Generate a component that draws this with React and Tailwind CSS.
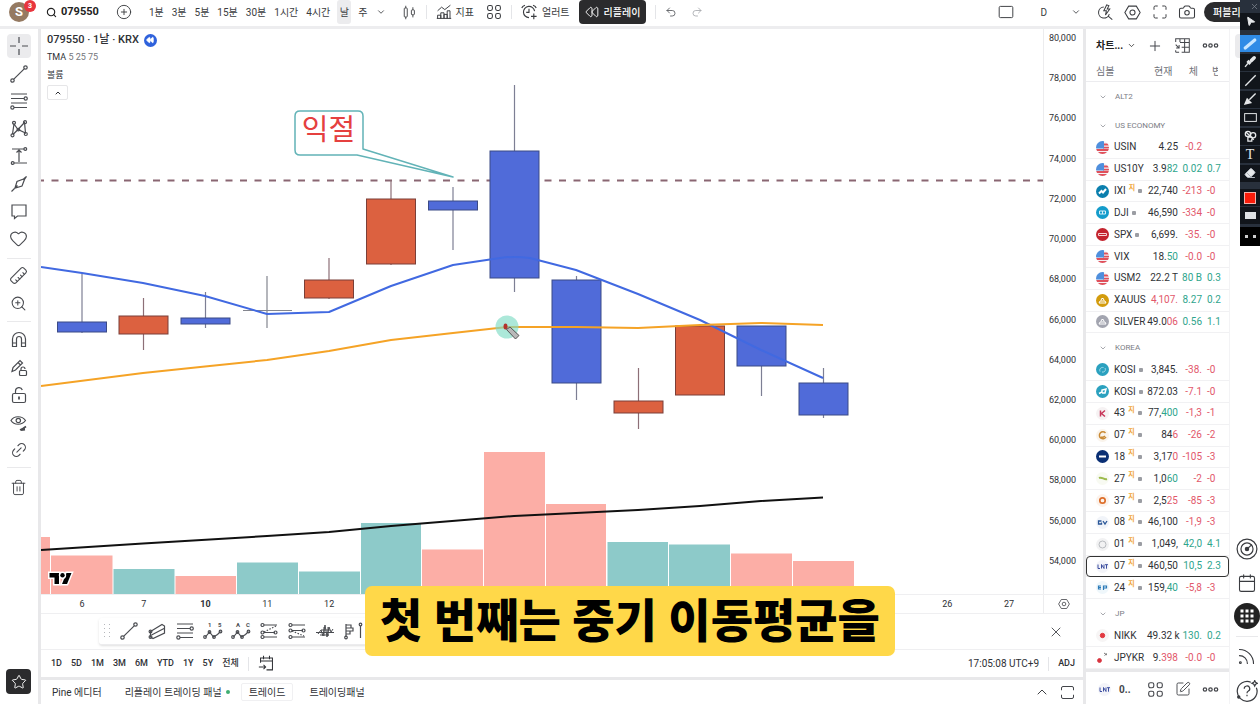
import {
  ChevronDown, ChevronUp, Search, CirclePlus, Undo2, Redo2, Camera, Heart, Trash2, Star, X, Plus,
  Calendar, Rss, Maximize, ZoomIn, Link2, Ruler, SquarePen, Rewind, Eraser,
  MousePointer2, Highlighter, Brush,
} from "lucide-react";

const FONT = "font-['Roboto','Noto_Sans_CJK_KR',sans-serif]";

function Draw({ size = 20, children, w = 1.2 }) {
  return (
    <svg width={size} height={size} viewBox="0 0 20 20" fill="none" stroke="currentColor" strokeWidth={w} aria-hidden="true">
      {children}
    </svg>
  );
}

const CrossIcon = () => <Draw><path d="M10 1v6M10 13v6M1 10h6M13 10h6" /></Draw>;
const TrendIcon = () => (
  <Draw><circle cx="3.5" cy="16.5" r="1.7" /><circle cx="16.5" cy="3.5" r="1.7" /><path d="M4.8 15.2 15.2 4.8" /></Draw>
);
const FibIcon = () => (
  <Draw><path d="M2 3h16M2 7.5h13M2 12h16M5 16.5h13" /><circle cx="16.7" cy="7.5" r="1.6" /><circle cx="3.4" cy="16.5" r="1.6" /></Draw>
);
const PatternIcon = () => (
  <Draw>
    <path d="M3.5 15 5 5l4 5.5 6.5-7 1 10.5L9 10.5 4 15.5" />
    <circle cx="3.5" cy="16.3" r="1.5" /><circle cx="5" cy="3.8" r="1.5" /><circle cx="9.4" cy="10.6" r="1.3" />
    <circle cx="16" cy="3.2" r="1.5" /><circle cx="16.8" cy="15" r="1.5" />
  </Draw>
);
const RangeIcon = () => (
  <Draw><path d="M3 3h12M5 17h13M10 4v12M7.5 6.5 10 4l2.5 2.5" /><circle cx="16.3" cy="3" r="1.4" /><circle cx="3.7" cy="17" r="1.4" /></Draw>
);
const PenIcon = () => (
  <Draw><path d="M2.500 17.500 8.500 11.500M6 14 8 7.500 14.500 5 17.500 2.500 15.500 5.500 13 12ZM14.500 5l.5 1" /></Draw>
);
const CommentIcon = () => <Draw><path d="M3 4h14v11H8.500L5.500 17.500V15H3Z" /></Draw>;
const MagnetIcon = () => (
  <Draw><path d="M3.500 16.500V9a6.500 6.500 0 0 1 13 0v7.500H12.500V9a2.500 2.500 0 0 0-5 0v7.500ZM3.500 13h4M12.500 13h4" /></Draw>
);
const PencilLockIcon = () => (
  <Draw>
    <path d="M3 13.500 4 9.500l7-7 2.500 2.500-7 7ZM9 4.500 11.500 7" /><rect x="10.500" y="12.500" width="7" height="5" rx="1" />
    <path d="M12 12.500V11a2 2 0 0 1 4 0" />
  </Draw>
);
const UnlockIcon = () => (
  <Draw>
    <rect x="3.500" y="8.500" width="13" height="9" rx="1.500" /><path d="M6.500 8.500V6a3.500 3.500 0 0 1 6.800-1" />
    <path d="M10 11.500v3" strokeWidth="1.800" />
  </Draw>
);
const EyeBrushIcon = () => (
  <Draw>
    <path d="M2 7.500C5 2.500 13 2.500 16.500 7.500 13 12.500 5 12.500 2 7.500Z" /><circle cx="9.300" cy="7.500" r="2.200" />
    <path d="m11 17 3-1.500 3-2M12 17l4-.5" strokeWidth="1.800" />
  </Draw>
);
const ChannelIcon = () => (
  <Draw>
    <path d="M3.500 10.500 15 3.500 17.500 5v7L6 17.500 3.500 16ZM4.500 14 17 7.500" />
    <circle cx="3.500" cy="16" r="1.400" /><circle cx="3.500" cy="10.500" r="1.400" />
  </Draw>
);
const WaveIcon = ({ a, b }) => (
  <Draw>
    <path d="m2.500 16 4-5 4 5 4-2.500 3-3" />
    <circle cx="2" cy="16" r="1.300" /><circle cx="6.500" cy="11" r="1.300" /><circle cx="11" cy="16" r="1.300" /><circle cx="17.500" cy="10.500" r="1.300" />
    <text x="5" y="5.500" fontSize="6" stroke="none" fill="currentColor" fontWeight="700">{a}</text>
    <text x="15" y="5.500" fontSize="6" stroke="none" fill="currentColor" fontWeight="700">{b}</text>
  </Draw>
);
const PositionIcon = ({ flip }) => (
  <Draw>
    <path d={flip ? "M5 4h13M5 9.500h11M5 16h13" : "M5 4h13M5 11.500h11M5 16h13"} />
    <path d={flip ? "m5 10 12 5" : "M5 11 17 5"} strokeDasharray="1.500 1.500" />
    <circle cx="3.500" cy="4" r="1.500" /><circle cx="3.500" cy={flip ? 9.500 : 11.500} r="1.500" />
    <circle cx="16.500" cy={flip ? 9.500 : 11.500} r="1.500" /><circle cx="3.500" cy="16" r="1.500" />
  </Draw>
);
const CycleIcon = () => (
  <Draw w={1}><path d="M1 11.500h18M3 13l3-4 2 6 2-11 2 12 2-10 2 5 2-3M6 9h9M9 6v9M13 6v9M5 14h9" /></Draw>
);
const ProfileIcon = () => (
  <Draw><path d="M3 3v13M3 4h5v3H3M3 7h7v3H3M3 10h4v3H3M17.500 5v12" /><circle cx="17.500" cy="3.500" r="1.300" /><circle cx="3" cy="16.500" r="1.300" /></Draw>
);
const CandlesIcon = () => (
  <Draw size={15}><rect x="3" y="4" width="4" height="12" rx="1" /><path d="M5 1v3M5 16v3M14.500 3v3.500M14.500 13v3.500" /><rect x="12.500" y="6.500" width="4" height="6.500" rx="1" /></Draw>
);
const IndicatorIcon = () => (
  <Draw size={16}><path d="M2 8.500 7 4l4 3 7-5.500M2 18v-4h4v4M6 18v-7h4v7M10 18v-5h4v5M14 18V8.500h3.500V18M1 18h18" /></Draw>
);
const AlarmIcon = () => (
  <Draw size={16} w={1.400}>
    <path d="M17 9a7 7 0 1 0-7 8M10 6v4.500H6.500M1 5c.5-2 2-3 4-3.500M19 5c-.5-2-2-3-4-3.500M16 12v7M12.500 15.500h7" />
  </Draw>
);
const DotsIcon = () => (
  <Draw size={17} w={1.500}><circle cx="3.500" cy="10" r="2" /><circle cx="10" cy="10" r="2" /><circle cx="16.500" cy="10" r="2" /></Draw>
);
const GridIcon = ({ size = 15 }) => (
  <Draw size={size} w={1.300}>
    <rect x="2" y="2" width="6" height="6" rx="2" /><rect x="12" y="2" width="6" height="6" rx="2" />
    <rect x="2" y="12" width="6" height="6" rx="2" /><rect x="12" y="12" width="6" height="6" rx="2" />
  </Draw>
);
const HexIcon = ({ size }) => (
  <Draw size={size}><path d="M5.500 2.500h9L19 10l-4.500 7.500h-9L1 10Z" /><circle cx="10" cy="10" r="3" /></Draw>
);
const QuickSearchIcon = () => (
  <Draw size={17}><path d="M8 3.500A6.500 6.500 0 1 0 14.500 12M13.500 14.500l4.500 4M11.500 1 8 8h3l-1 5 5-7h-3L14 2Z" /></Draw>
);
const TableIcon = () => (
  <Draw size={17}><path d="M2 6V2h16v16H9M7 6.500h11M9 12h9M12.500 2v16M7 2v4M2 9l4 4M6 9.500V13H2.500M2 18h4M2 15.500V18" /></Draw>
);
const TargetIcon = () => (
  <Draw size={22} w={1.100}><circle cx="10" cy="10" r="9" /><circle cx="10" cy="10" r="5.500" /><circle cx="10" cy="10" r="1.500" fill="currentColor" /><path d="m10 10 4.500-4" /></Draw>
);
const HelpIcon = () => (
  <Draw size={22} w={1.100}>
    <path d="M13.500 2A9 9 0 1 0 18.500 7" /><path d="M7.500 8a2.500 2.500 0 1 1 3.500 2.200q-1 .5-1 1.800M10 13.500v1.300" />
    <path d="m17 .5.800 1.700 1.700.8-1.700.8L17 5.500l-.8-1.700-1.700-.8 1.700-.8Z" /><circle cx="2.500" cy="15.500" r="1" fill="currentColor" />
  </Draw>
);
const BarCalendarIcon = () => (
  <Draw size={17}><path d="M3 9V3.500h14v14H10M3 7h14M6.500 1v4M13.500 1v4M1 14h8M6.500 11.500 9 14l-2.500 2.500" /></Draw>
);

const candles = [
  [82, 322, 332, 274, 333, 0], [143.5, 316, 334, 298, 350, 1], [205.500, 318, 324, 292, 328, 0],
  [329, 280, 298, 258, 299, 1], [391, 199, 264, 180, 265, 1],
  [453, 201, 210, 187, 250, 0], [514.500, 151, 278, 85, 292, 0], [576.500, 280, 383, 276, 400, 0],
  [638.500, 401, 413, 368, 429, 1], [700, 326, 395, 324, 395, 1], [761.500, 326, 366, 326, 396, 0],
  [823.500, 383, 415, 368, 418, 0],
];
const volumes = [
  [41, 50, 537, 1], [51, 112.500, 555.500, 1], [113.500, 174.500, 569, 0], [175.500, 236, 576, 1], [237, 298, 562.500, 0],
  [299, 360, 571.500, 0], [361, 421, 523, 0], [422, 483, 549.500, 1], [484, 545, 452, 1], [546, 606, 504, 1],
  [607.500, 668, 542, 0], [669, 730, 544.500, 0], [731, 792, 553.500, 1], [793, 854, 561, 1],
];

function Chart() {
  return (
    <svg className="block h-full w-full" viewBox="41 29 1002 565" preserveAspectRatio="none" role="img" aria-label="079550 chart">
      {volumes.map(([a, b, y, up]) => (
        <rect key={a} x={a} y={y} width={b - a} height={594 - y} fill={up ? "#fcaea6" : "#8dcac9"} />
      ))}
      <path d="M41 180.500H1043" stroke="#8a6672" strokeWidth="1.800" strokeDasharray="7 7.500" strokeDashoffset="4" />
      <path d="M267 276V328M243 310.500H292" stroke="#84868f" strokeWidth="1.200" />
      {candles.map(([x, t, b, hi, lo, up]) => (
        <g key={x}>
          <path d={`M${x} ${hi}V${lo}`} stroke={up ? "#8d6f77" : "#7d7f94"} strokeWidth="1.200" />
          <rect x={x - 24.500} y={t} width="49" height={b - t} fill={up ? "#dc6140" : "#506bd9"} stroke={up ? "#7a3f38" : "#3b4a86"} strokeWidth="1" />
        </g>
      ))}
      <path fill="none" stroke="#4169e1" strokeWidth="2" strokeLinejoin="round"
        d="M41 267 82 273 143 283 205 296 267 314 329 312 391 286 453 265 500 258Q514 256 530 258L576 270 638 294 700 320 761 350 823 378" />
      <path fill="none" stroke="#f5a326" strokeWidth="2" strokeLinejoin="round"
        d="M41 386 143 373 205 366.500 267 360 329 351 391 340 453 333 507 327 576 327 638 328 700 325 761 323 823 325" />
      <path fill="none" stroke="#111" strokeWidth="2"
        d="M41 550 143 543.500 267 536 329 532 391 526 514 516 576 513 638 510 700 506 761 501 823 497.500" />
      <path fill="#fff" stroke="#62b3b7" strokeWidth="1.500" strokeLinejoin="round"
        d="M300 111H358Q363 111 363 116V149L453 177 357 155H300Q295 155 295 150V116Q295 111 300 111Z" />
      <text x="328.500" y="140" textAnchor="middle" fontSize="29" fill="#e5403f" fontFamily="Noto Sans CJK KR, sans-serif">익절</text>
      <g stroke="#fff" strokeWidth="3" paintOrder="stroke" fill="#000">
        <path d="M49.500 573H59V584H54.500V577.500H49.500Z" /><path d="M66.500 573H71.500L67 584H62Z" /><circle cx="62.500" cy="575.300" r="2.200" />
      </g>
      <circle cx="507" cy="327" r="11.500" fill="#7fdcc4" fillOpacity=".65" />
      <ellipse cx="505.500" cy="326.500" rx="2" ry="3" fill="#b3332c" />
      <path d="m506.500 329.500 3.500-2.500 9 8.500-3.500 3.500Z" fill="#b9b9b9" stroke="#555" strokeWidth="1" />
    </svg>
  );
}

function Bullet({ kind }) {
  if (kind === "us")
    return (
      <svg width="13" height="13" viewBox="0 0 13 13" className="shrink-0" aria-hidden="true">
        <clipPath id="disc"><circle cx="6.500" cy="6.500" r="6.500" /></clipPath>
        <g clipPath="url(#disc)">
          <path fill="#f3f3f6" d="M0 0h13v13H0z" />
          <path stroke="#e0505b" strokeWidth="1.800" d="M7 3.500h6M7 6.700h6M0 9h13M1 12h11" />
          <path fill="#4f8fdd" d="M0 0h8v7.500H0z" />
        </g>
      </svg>
    );
  const [bg, fg, mark] = {
    ixi: ["#0b7fae", "#fff", <path d="M3 8.500 5.500 6l1.500 1.500L10 4" strokeWidth="2" />],
    dji: ["#149ccb", "#d6effa", <path d="M3.500 5h6v3h-6zM6.500 5v3" />],
    spx: ["#c4242f", "#f6d5d7", <path d="M2.500 5.500h8v2h-8z" />],
    gold: ["#d39c0d", "#fff", <path d="m3 9 1-2h5l1 2ZM5 6.500l.700-2h1.600l.7 2" />],
    silver: ["#a3a5b0", "#fff", <path d="m3 9 1-2h5l1 2ZM5 6.500l.700-2h1.600l.7 2" />],
    kospi: ["#2ba1bf", "#a5dcea", <path d="M4 8.500C3 6 5 4 7.500 4.500M6 9c3 .5 4-2 3-4" strokeWidth="1" />],
    kosdaq: ["#2ba1bf", "#fff", <path d="m3 8.500 3-1.500V5l4-1-1 4H6" strokeWidth="1.500" />],
    k43: ["#f6f2f3", "#c8375a", <path d="M4.500 3.500v6M9 3.500 5.500 6.500 9 9.500" strokeWidth="1.500" />],
    c07: ["#faf4ec", "#c98a35", <path d="M9.500 4A3.500 3.500 0 1 0 10 8M5 8c2 1 3 0 4-1" strokeWidth="1.500" />],
    n18: ["#0a2f74", "#fff", <path d="M3 6.500h7" strokeWidth="2" />],
    g27: ["#f8faf2", "#9dbb4d", <path d="M3 6c3-1.500 5 2 8 1" strokeWidth="2" />],
    o37: ["#fcf3ec", "#dd6f2b", <circle cx="6.500" cy="6.500" r="2.700" strokeWidth="1.700" />],
    gv: ["#f1f4f9", "#2a5798", <path d="M5.500 5h-3v3h3V6.500M7 5l2 3 2-3" strokeWidth="1.300" />],
    ring: ["#f2f2f3", "#b9bcc0", <circle cx="6.500" cy="6.500" r="3.500" />],
    lnt: ["#f3f4f9", "#3c4ea0", <path d="M2 4.500v4h2M5.500 8.500v-4l2.500 4v-4M9 4.700h3M10.500 4.700v4" />],
    kp: ["#eff7fb", "#2a7ab8", <path d="M5 5H2.500v3H5M2.500 6.500H5M7.500 9V5h3v2h-3" strokeWidth="1.200" />],
    jp: ["#f7f5f5", "#e23840", <circle cx="6.500" cy="6.500" r="2.200" fill="#e23840" />],
    jpkr: ["#fff", "#d8343f", <><circle cx="3.500" cy="9.500" r="1.900" fill="#d8343f" /><path d="m8 2 3 2M8.500 4.500 11 2.500" stroke="#777" /></>],
  }[kind];
  return (
    <svg width="13" height="13" viewBox="0 0 13 13" fill="none" stroke={fg} className="shrink-0" aria-hidden="true">
      <circle cx="6.500" cy="6.500" r="6.500" fill={bg} stroke="none" />
      {mark}
    </svg>
  );
}

const R = "text-[#e2586b]";
const G = "text-[#2fa58d]";
// icon, symbol, delayed tag, status dot, last (dark part, tinted part), change, percent, tint, tint of the last digits
const us = [
  ["us", "USIN", 0, 0, "4.25", "", "-0.2", "", R],
  ["us", "US10Y", 0, 0, "3.9", "82", "0.02", "0.7", G],
  ["ixi", "IXI", 1, 1, "22,740", "", "-213", "-0", R],
  ["dji", "DJI", 0, 1, "46,590", "", "-334", "-0", R],
  ["spx", "SPX", 0, 1, "6,699.", "", "-35.", "-0", R],
  ["us", "VIX", 0, 0, "18.", "50", "-0.0", "-0", R, G],
  ["us", "USM2", 0, 0, "22.2 T", "", "80 B", "0.3", G],
  ["gold", "XAUUS", 0, 0, "", "4,107.", "8.27", "0.2", G, R],
  ["silver", "SILVER", 0, 0, "49.0", "06", "0.56", "1.1", G, R],
];
const kr = [
  ["kospi", "KOSI", 0, 1, "3,845.", "", "-38.", "-0", R],
  ["kosdaq", "KOSI", 0, 1, "872.03", "", "-7.1", "-0", R],
  ["k43", "43", 1, 1, "77,", "400", "-1,3", "-1", R, G],
  ["c07", "07", 1, 1, "84", "6", "-26", "-2", R],
  ["n18", "18", 1, 1, "3,17", "0", "-105", "-3", R],
  ["g27", "27", 1, 1, "1,0", "60", "-2", "-0", R, G],
  ["o37", "37", 1, 1, "2,5", "25", "-85", "-3", R],
  ["gv", "08", 1, 1, "46,100", "", "-1,9", "-3", R],
  ["ring", "01", 1, 1, "1,049,", "", "42,0", "4.1", G],
  ["lnt", "07", 1, 1, "460,50", "", "10,5", "2.3", G],
  ["kp", "24", 1, 1, "159,", "40", "-5,8", "-3", R, G],
];
const jp = [
  ["jp", "NIKK", 0, 0, "49.32 k", "", "130.", "0.2", G],
  ["jpkr", "JPYKR", 0, 0, "9.", "398", "-0.0", "-0", R],
];

function Row({ r }) {
  const [icon, sym, tag, dot, a, b, chg, pct, tint, tail] = r;
  const on = icon === "lnt";
  const cell = "h-[21px] border-b border-[#f1f1f3] p-0 whitespace-nowrap";
  return (
    <tr className={on ? "rounded-[4px] outline-[1.5px] -outline-offset-1 outline-[#333]" : ""}>
      <td className={cell}>
        <div className="flex items-center pl-[10px]">
          <Bullet kind={icon} />
          <span className="ml-[5px]">{sym}</span>
          {tag ? <span className="mb-[7px] ml-[3px] text-[7px] leading-[8px] font-bold text-[#f0a63a]">지</span> : null}
          {dot ? <span className="ml-[3px] size-[4px] shrink-0 rounded-[1px] bg-[#9b9da3]" /> : null}
        </div>
      </td>
      <td className={`${cell} text-right`}>{a}<span className={tail || tint}>{b}</span></td>
      <td className={`${cell} text-right ${tint}`}>{chg}</td>
      <td className={`${cell} pl-[5px] ${tint}`}>{pct}</td>
    </tr>
  );
}

function Section({ name, tall }) {
  return (
    <tr>
      <td colSpan={4} className={`p-0 ${tall ? "h-[28px]" : "h-[25px] pt-[4px]"}`}>
        <button className="flex items-center gap-[8px] pl-[13px] text-[8px] text-[#7b7d85]">
          <ChevronDown size={8} />{name}
        </button>
      </td>
    </tr>
  );
}

function Watchlist() {
  const th = "border-b border-[#ececef] p-0 font-normal";
  return (
    <section className="flex w-[146px] shrink-0 flex-col border-l-[3px] border-[#e8e8ea] text-[#45474c]">
      <div className="flex h-[33px] items-center pl-[10px]">
        <button className="flex w-[40px] items-center justify-between text-[10px] font-bold text-[#222]">차트...<ChevronDown size={9} /></button>
        <button aria-label="Add symbol" className="ml-[11px]"><Plus size={16} strokeWidth={1.500} /></button>
        <button aria-label="Table view" className="ml-[11px]"><TableIcon /></button>
        <button aria-label="More" className="ml-[11px]"><DotsIcon /></button>
      </div>
      <div className="min-h-0 flex-1">
        <table className="h-full w-full table-fixed border-separate border-spacing-0 text-[10px] leading-[14px] text-[#303236]">
          <colgroup><col className="w-[61px]" /><col className="w-[31px]" /><col className="w-[24px]" /><col /></colgroup>
          <thead>
            <tr className="text-[#6f7178]">
              <th className={`${th} h-[20px] pl-[10px] text-left`}>심볼</th>
              <th className={`${th} pl-[7px] text-left`}>현재</th>
              <th className={`${th} pr-[4px] text-right`}>체</th>
              <th className={`${th} pl-[10px] text-left`}><div className="w-[6px] overflow-hidden">변</div></th>
            </tr>
          </thead>
          <tbody>
            <Section name="ALT2" tall />
            <Section name="US ECONOMY" />
            {us.map((r) => <Row key={r[1]} r={r} />)}
            <Section name="KOREA" />
            {kr.map((r) => <Row key={r[0]} r={r} />)}
            <Section name="JP" />
            {jp.map((r) => <Row key={r[1]} r={r} />)}
          </tbody>
        </table>
      </div>
      <div className="flex h-[35px] items-center border-t-[3px] border-[#e8e8ea] pt-[2px] pl-[12px]">
        <Bullet kind="lnt" />
        <span className="ml-[8px] text-[10px] font-bold">0..</span>
        <button aria-label="Layout" className="ml-[16px]"><GridIcon size={17} /></button>
        <button aria-label="Edit" className="ml-[11px]"><SquarePen size={16} strokeWidth={1.400} /></button>
        <button aria-label="More" className="ml-[11px]"><DotsIcon /></button>
      </div>
    </section>
  );
}

const Sep = () => <span className="h-[14px] w-px bg-[#e4e5e8]" />;

function Header() {
  return (
    <header className="flex h-[29px] shrink-0 items-center overflow-hidden border-b-[3px] border-[#ededef] pb-[2px] text-[10px] whitespace-nowrap text-[#3a3c40]">
      <button aria-label="Account" className="relative ml-[9px] grid size-[20px] shrink-0 place-items-center rounded-full bg-[#957a62] text-[13px] font-bold text-white">
        S<span className="absolute -top-[2px] left-[15px] grid size-[12px] place-items-center rounded-full bg-[#e8353e] text-[7px]">3</span>
      </button>
      <button className="ml-[17px] flex items-center gap-[4px] text-[11px] font-bold text-[#222]"><Search size={11} strokeWidth={2.500} />079550</button>
      <button aria-label="Compare" className="ml-[17px]"><CirclePlus size={16} strokeWidth={1.400} /></button>
      <nav className="ml-[17px] flex items-center gap-[8px]">
        {["1분", "3분", "5분", "15분", "30분", "1시간", "4시간"].map((t) => <button key={t}>{t}</button>)}
        <button className="-mx-[1px] h-[24px] w-[14px] rounded-[3px] bg-[#ececee]">날</button>
        <button>주</button>
        <button aria-label="Intervals"><ChevronDown size={10} /></button>
      </nav>
      <div className="ml-[16px] flex items-center gap-[9px]">
        <button aria-label="Candles"><CandlesIcon /></button>
        <Sep />
        <button className="flex items-center gap-[4px]"><IndicatorIcon />지표</button>
        <button aria-label="Templates" className="ml-[3px]"><GridIcon size={16} /></button>
        <Sep />
        <button className="flex items-center gap-[5px]"><AlarmIcon />얼러트</button>
        <button className="flex h-[24px] items-center gap-[5px] rounded-[4px] bg-[#2b2b2d] px-[6px] font-medium text-white"><Rewind size={14} strokeWidth={1.600} />리플레이</button>
        <Sep />
        <button aria-label="Undo" className="text-[#55575c]"><Undo2 size={12} strokeWidth={1.700} /></button>
        <button aria-label="Redo" className="ml-[5px] text-[#a7a9ae]"><Redo2 size={12} strokeWidth={1.700} /></button>
      </div>
      <div className="ml-auto flex items-center">
        <button aria-label="Layout"><Draw size={16}><rect x="1.500" y="3" width="17" height="14" rx="1.500" /></Draw></button>
        <button className="ml-[26px]">D</button>
        <button aria-label="Save menu" className="ml-[24px]"><ChevronDown size={10} /></button>
        <button aria-label="Quick search" className="ml-[16px]"><QuickSearchIcon /></button>
        <button aria-label="Settings" className="ml-[10px]"><HexIcon size={17} /></button>
        <button aria-label="Fullscreen" className="ml-[11px]"><Maximize size={16} strokeWidth={1.500} /></button>
        <button aria-label="Snapshot" className="ml-[10px]"><Camera size={18} strokeWidth={1.400} /></button>
        <button className="ml-[8px] h-[20px] w-[56px] rounded-l-full bg-[#2b2b2d] pl-[9px] text-left font-medium text-white">퍼블리</button>
      </div>
    </header>
  );
}

function Tool({ label, children, on }) {
  return (
    <button aria-label={label} className={`grid size-[24px] place-items-center rounded-[4px] ${on ? "bg-[#ebebed]" : ""}`}>{children}</button>
  );
}

function LeftBar() {
  const line = "h-px w-[24px] shrink-0 bg-[#e9e9eb]";
  return (
    <aside className="flex w-[41px] shrink-0 flex-col items-center border-r-[3px] border-[#e8e8ea] pt-[5px] pr-px pb-[10px] text-[#4a4c51]">
      <div className="flex h-[217px] flex-col justify-between">
        <Tool label="Cross" on><CrossIcon /></Tool>
        <Tool label="Trend line"><TrendIcon /></Tool>
        <Tool label="Fib"><FibIcon /></Tool>
        <Tool label="Patterns"><PatternIcon /></Tool>
        <Tool label="Range"><RangeIcon /></Tool>
        <Tool label="Brush"><PenIcon /></Tool>
        <Tool label="Text"><CommentIcon /></Tool>
        <Tool label="Icons"><Heart size={19} strokeWidth={1.400} /></Tool>
      </div>
      <span className={`${line} mt-[7px] mb-[4px]`} />
      <div className="flex flex-col gap-[4px]">
        <Tool label="Measure"><Ruler size={19} strokeWidth={1.400} className="rotate-90" /></Tool>
        <Tool label="Zoom"><ZoomIn size={17} strokeWidth={1.500} /></Tool>
      </div>
      <span className={`${line} my-[6px]`} />
      <div className="flex h-[134px] flex-col justify-between">
        <Tool label="Magnet"><MagnetIcon /></Tool>
        <Tool label="Keep drawing"><PencilLockIcon /></Tool>
        <Tool label="Lock"><UnlockIcon /></Tool>
        <Tool label="Hide"><EyeBrushIcon /></Tool>
        <Tool label="Sync"><Link2 size={18} strokeWidth={1.500} className="-rotate-45" /></Tool>
      </div>
      <span className={`${line} mt-[5px] mb-[7px]`} />
      <Tool label="Remove"><Trash2 size={17} strokeWidth={1.400} /></Tool>
      <button aria-label="Favorites" className="mt-auto grid size-[25px] place-items-center rounded-[4px] bg-[#2b2b2d] text-white"><Star size={16} strokeWidth={1.400} /></button>
    </aside>
  );
}

const prices = [80, 78, 76, 74, 72, 70, 68, 66, 64, 62, 60, 58, 56, 54];
const days = [6, 7, 10, 11, 12, 13, 14, 17, 18, 19, 20, 21, 24, 25, 26, 27];

function ChartColumn() {
  return (
    <main className="flex min-w-0 flex-1 flex-col text-[#2e3035]">
      <div className="flex min-h-0 flex-1">
        <div className="relative min-w-0 flex-1">
          <Chart />
          <div className="absolute top-[3px] left-[6px] flex flex-col items-start text-[9px]">
            <div className="flex items-center gap-[5px] text-[11px] leading-[16px] font-medium">
              079550 · 1날 · KRX
              <span className="grid size-[13px] place-items-center rounded-full bg-[#2f62dc] text-white"><Rewind size={8} fill="currentColor" /></span>
            </div>
            <div className="mt-[1px] leading-[16px]">TMA <span className="text-[#74767c]">5 25 75</span></div>
            <div className="mt-[2px] leading-[16px]">볼륨</div>
            <button aria-label="Collapse" className="mt-[2px] grid h-[15px] w-[21px] place-items-center rounded-[2px] border border-[#e6e6e8]"><ChevronUp size={8} strokeWidth={3} /></button>
          </div>
        </div>
        <div className="flex w-[40px] flex-col items-end justify-between border-l border-[#ececee] pt-px pr-[7px] pb-[25px] text-[9px] leading-[16px]">
          {prices.map((p) => <span key={p}>{p},000</span>)}
        </div>
      </div>
      <div className="flex h-[20px] border-y border-[#efeff1] text-[9px] leading-[19px]">
        <div className="flex flex-1 pr-[3px] pl-[10px] text-center">
          {days.map((d) => <span key={d} className={`flex-1 ${d === 10 ? "font-bold" : ""}`}>{d}</span>)}
        </div>
        <button aria-label="Axis settings" className="grid w-[40px] place-items-center border-l border-[#ececee]"><HexIcon size={12} /></button>
      </div>
      <div className="flex h-[36px] items-center justify-between border-b border-[#efeff1] pr-[19px] pl-[58px] text-[#4a4c51]">
        <div className="flex h-[27px] w-[640px] items-center gap-[8px] rounded-[3px] border-b border-[#ececee] bg-white pl-[4px] shadow">
          <svg width="8" height="14" viewBox="0 0 8 14" fill="#b5b7bb" aria-hidden="true">
            {[1, 5, 9, 13].map((y) => <path key={y} d={`M1 ${y}h1v-1H1zM6 ${y}h1v-1H6z`} />)}
          </svg>
          {[
            ["Line", <TrendIcon />], ["Channel", <ChannelIcon />], ["Retracement", <FibIcon />],
            ["Impulse wave", <WaveIcon a="1" b="5" />], ["Correction wave", <WaveIcon a="A" b="C" />],
            ["Long position", <PositionIcon />], ["Short position", <PositionIcon flip />],
            ["Cycles", <CycleIcon />], ["Volume profile", <ProfileIcon />],
          ].map(([l, i]) => <button key={l} aria-label={l}>{i}</button>)}
        </div>
        <button aria-label="Close toolbar"><X size={16} strokeWidth={1.400} /></button>
      </div>
      <div className="flex h-[27px] items-center gap-[9px] pr-[8px] pl-[10px] text-[9px] font-medium">
        {["1D", "5D", "1M", "3M", "6M", "YTD", "1Y", "5Y", "전체"].map((t) => <button key={t}>{t}</button>)}
        <Sep />
        <button aria-label="Go to date"><BarCalendarIcon /></button>
        <span className="ml-auto text-[10px] font-normal">17:05:08 UTC+9</span>
        <Sep />
        <button>ADJ</button>
      </div>
      <div className="flex h-[27px] items-center border-t-[3px] border-[#e8e8ea] pr-[8px] pl-[11px] text-[10px]">
        <button>Pine 에디터</button>
        <button className="ml-[23px] flex items-center gap-[4px]">리플레이 트레이딩 패널<span className="size-[4px] rounded-full bg-[#3fae72]" /></button>
        <button className="ml-[11px] h-[18px] rounded-[2px] border border-[#f0f0f2] px-[7px]">트레이드</button>
        <button className="ml-[16px]">트레이딩패널</button>
        <button aria-label="Open panel" className="ml-auto"><ChevronUp size={16} strokeWidth={1.400} /></button>
        <button aria-label="Maximize panel" className="ml-[10px]"><Draw size={15}><path d="M2 7V4q0-2 2-2h12q2 0 2 2v3M2 13v3q0 2 2 2h12q2 0 2-2v-3" /></Draw></button>
      </div>
    </main>
  );
}

function Rail() {
  return (
    <aside className="flex w-[31px] shrink-0 flex-col items-center border-l border-[#f3f3f5] pt-[5px] pb-[2px] pl-[3px] text-[#3a3c40]">
      <span className="h-[24px] w-[24px] rounded-[4px] bg-[#ebebed]" />
      <button aria-label="Screener" className="mt-auto"><TargetIcon /></button>
      <button aria-label="Calendar" className="mt-[13px]"><Calendar size={20} strokeWidth={1.300} /></button>
      <button aria-label="Products" className="mt-[10px] grid size-[26px] place-items-center rounded-full bg-[#222] text-white">
        <svg width="14" height="14" viewBox="0 0 14 14" fill="currentColor" aria-hidden="true">
          {[0, 5, 10].map((y) => [0, 5, 10].map((x) => <rect key={`${x}${y}`} x={x + 0.500} y={y + 0.500} width="3" height="3" />))}
        </svg>
      </button>
      <span className="mt-[7px] h-px w-[22px] bg-[#e9e9eb]" />
      <button aria-label="Feed" className="mt-[9px]"><Rss size={21} strokeWidth={1.300} /></button>
      <button aria-label="Help" className="mt-[13px]"><HelpIcon /></button>
    </aside>
  );
}

function Palette() {
  const cell = "grid h-[17px] w-full shrink-0 place-items-center";
  return (
    <div className="absolute top-0 right-0 flex w-[20px] flex-col bg-[#28303c] text-[#e6e8ea]">
      <button aria-label="Close palette" className="flex h-[13px] items-center justify-end pr-px text-[#7c838c]"><X size={9} /></button>
      <button aria-label="Pointer" className={`${cell} bg-[#11151b]`}><MousePointer2 size={11} fill="currentColor" className="rotate-12" /></button>
      <div className="mt-[5px] flex h-[147px] flex-col justify-between">
        <button aria-label="Pen" className={`${cell} bg-[#2f8be6]`}><Draw size={16} w={4}><path d="M4 15 16 5" strokeLinecap="round" stroke="#c8e6ff" /></Draw></button>
        <button aria-label="Highlighter" className={`${cell} bg-[#11151b]`}><Draw size={14} w={2}><path d="m3 17 4-5" /><path d="m7 12 3-3" strokeWidth="6" /><path d="m12 8 4-4" strokeWidth="5" strokeLinecap="round" /></Draw></button>
        <button aria-label="Line" className={`${cell} bg-[#11151b]`}><Draw size={13} w={2}><path d="M2 18 18 2" /></Draw></button>
        <button aria-label="Brush arrow" className={`${cell} bg-[#11151b]`}><Draw size={14} w={2}><path d="M9 11 18 2" /><path d="m3 17 3-7 5 5Z" fill="currentColor" /></Draw></button>
        <button aria-label="Rectangle" className={`${cell} bg-[#11151b]`}><Draw size={13} w={1.500}><rect x="1" y="4" width="18" height="12" /></Draw></button>
        <button aria-label="Shapes" className={`${cell} bg-[#11151b]`}><Draw size={13} w={2}><circle cx="6" cy="6" r="4" /><circle cx="14" cy="8" r="4" /><path d="M6 11h6v6H6ZM3 3l12 12" /></Draw></button>
        <button aria-label="Text" className={`${cell} bg-[#11151b] font-['Liberation_Serif',serif] text-[14px] leading-none`}>T</button>
        <button aria-label="Eraser" className={`${cell} bg-[#11151b]`}><Eraser size={12} fill="currentColor" stroke="#aeb4bb" /></button>
      </div>
      <button aria-label="Color red" className={`${cell} mt-[7px] bg-[#11151b]`}><span className="size-[12px] border border-[#f6b0a8] bg-[#fa1c0a]" /></button>
      <button aria-label="Stroke" className={`${cell} mt-[1px] bg-[#11151b]`}><span className="h-[7px] w-[11px] bg-[#dfe2e5]" /></button>
      <div className="mt-[3px] flex h-[19px] items-center justify-center gap-[5px] bg-black"><i className="size-[3px] bg-[#ccc]" /><i className="size-[3px] bg-[#ccc]" /></div>
    </div>
  );
}

export default function App() {
  return (
    <div className={`relative flex h-screen min-h-[700px] flex-col overflow-hidden bg-white ${FONT}`}>
      <Header />
      <div className="flex min-h-0 flex-1">
        <LeftBar />
        <ChartColumn />
        <Watchlist />
        <Rail />
      </div>
      <Palette />
      <div className="pointer-events-none absolute inset-x-0 bottom-[48px] flex justify-center">
        <p className="rounded-[7px] bg-[#ffd849] px-[15px] text-[46px] leading-[70px] font-black whitespace-nowrap text-black">첫 번째는 중기 이동평균을</p>
      </div>
    </div>
  );
}
